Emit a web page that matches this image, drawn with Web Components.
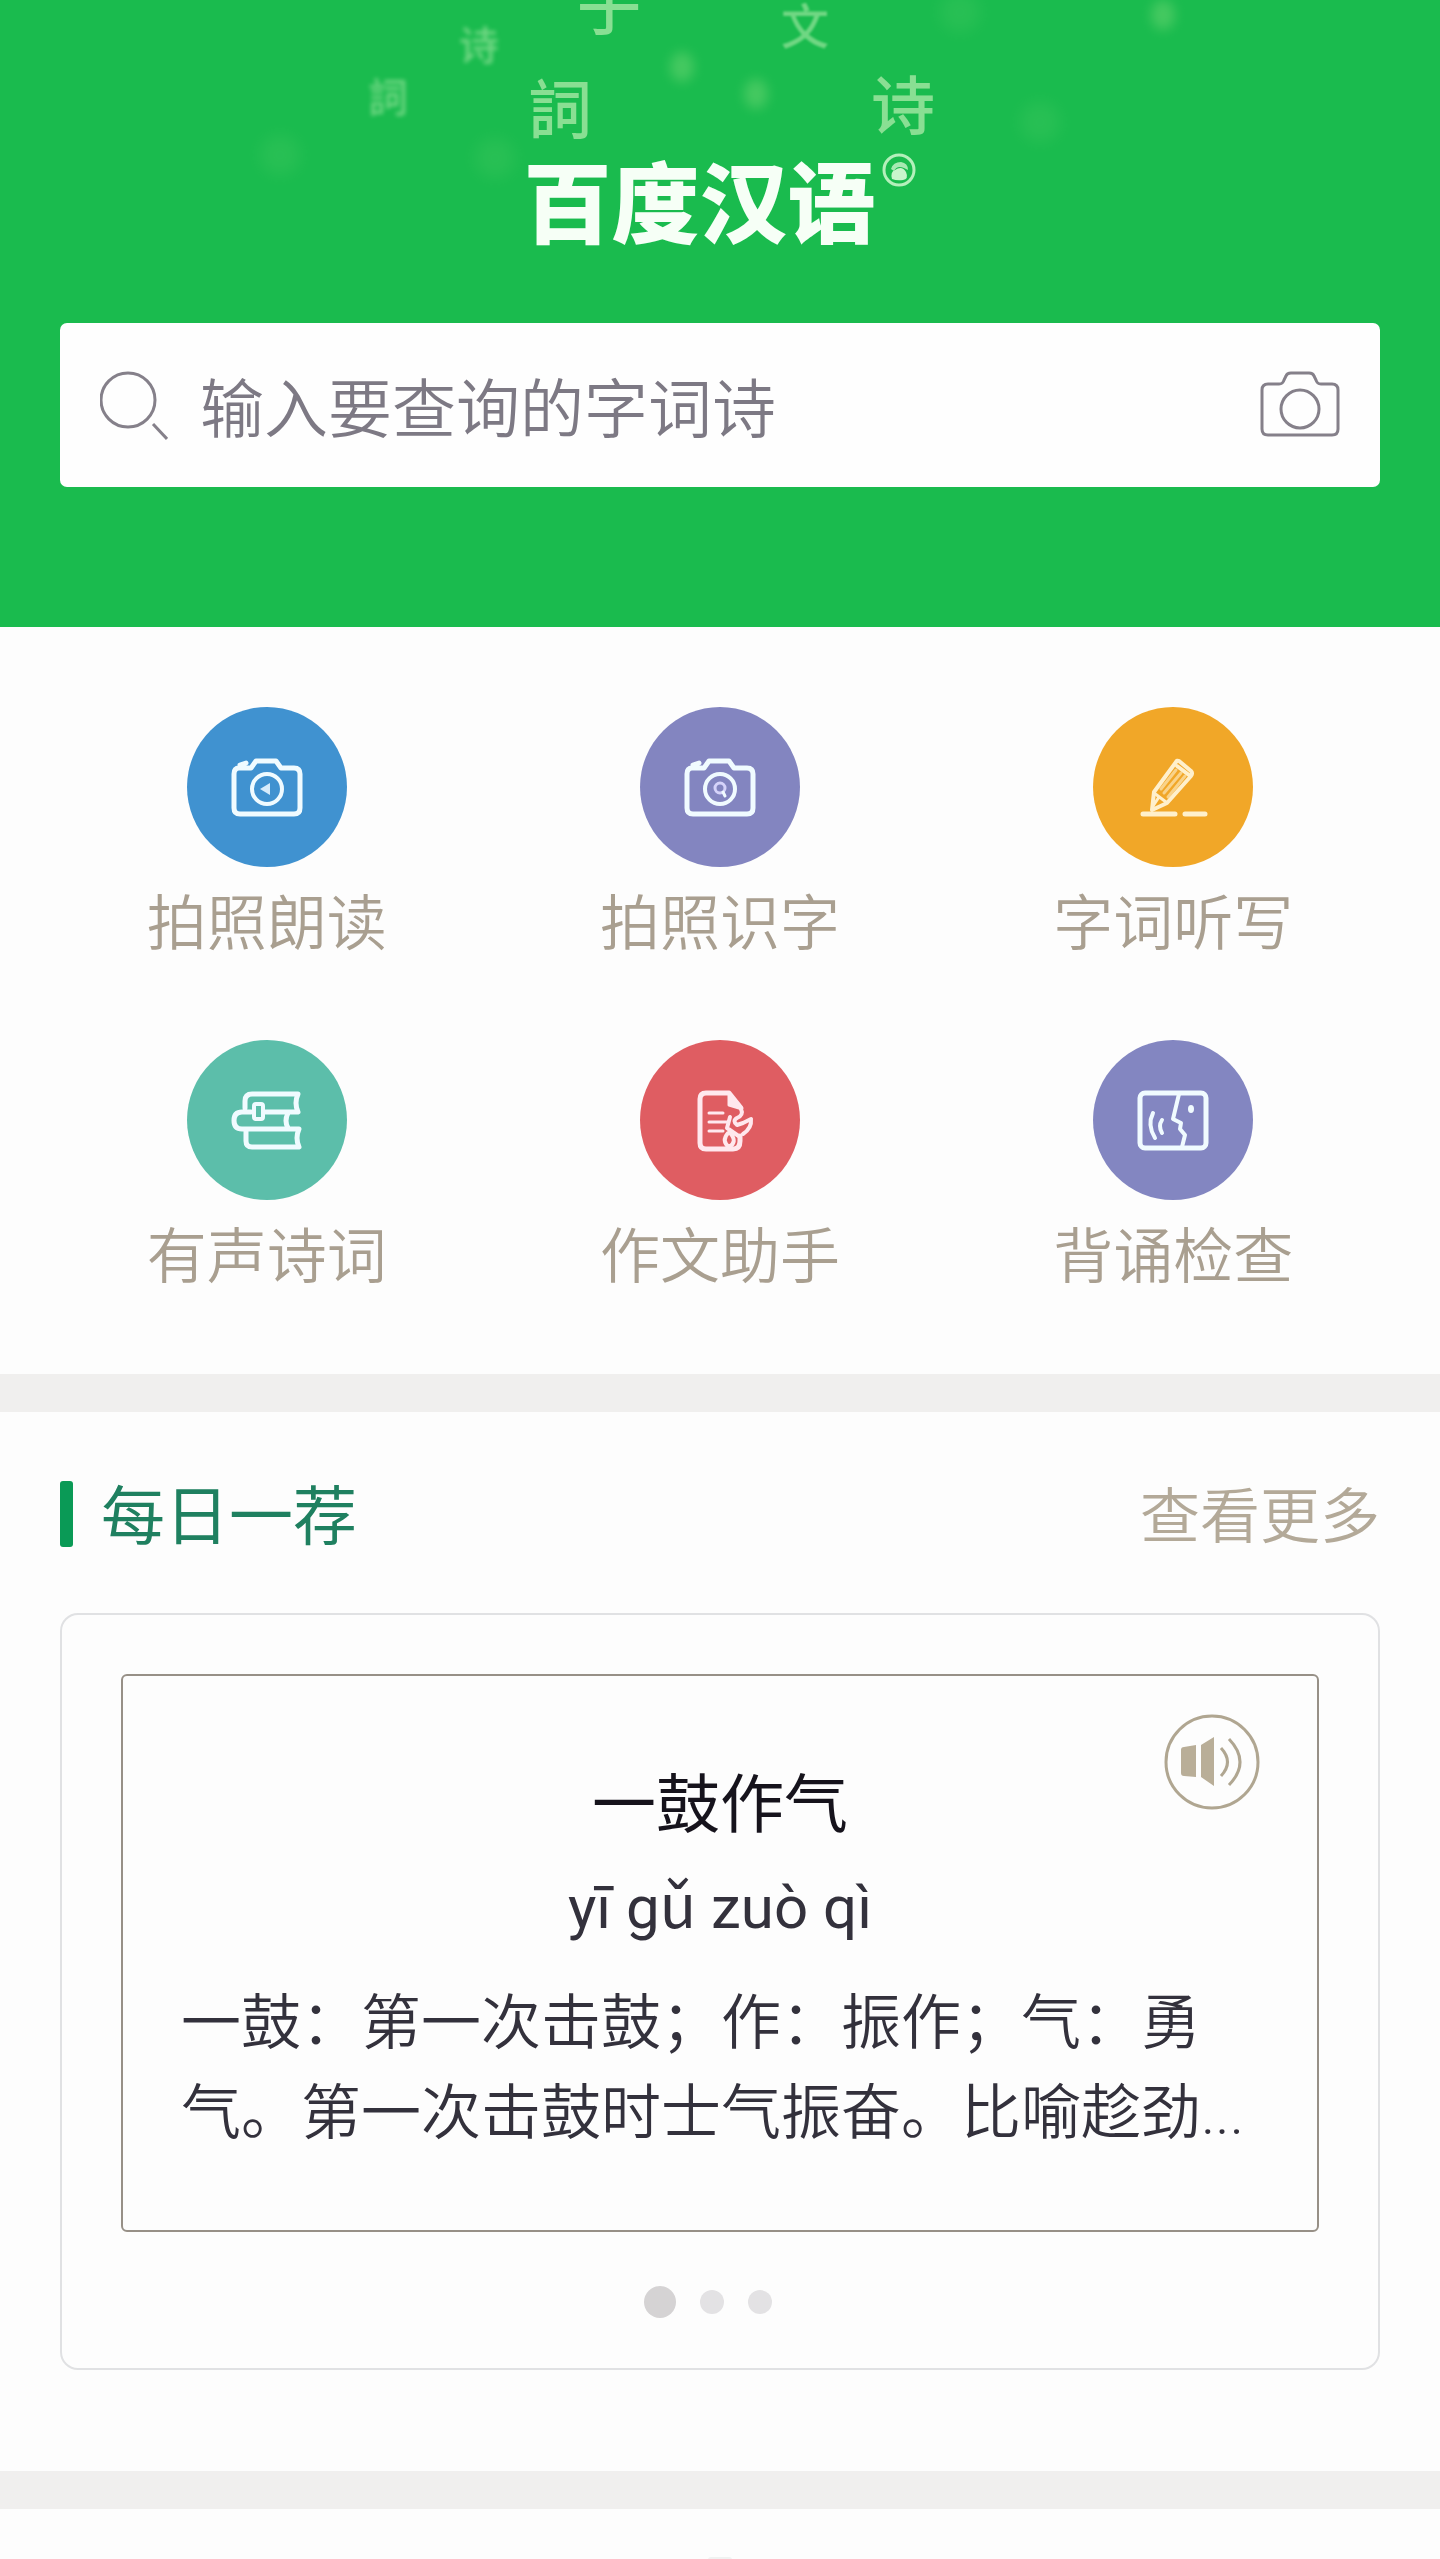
<!DOCTYPE html>
<html lang="zh-CN">
<head>
<meta charset="utf-8">
<meta name="viewport" content="width=device-width, initial-scale=1">
<title>百度汉语</title>
<style>
  body { margin: 0; background: #fdfdfd; color: #33313c; font-family: Roboto, "Noto Sans CJK SC", sans-serif; font-weight: 350; }
</style>
</head>
<body>
<hanyu-app></hanyu-app>
<script>
const define = (name, html) => customElements.define(name, class extends HTMLElement {
  constructor() {
    super();
    const t = document.createElement('template');
    t.innerHTML = html;
    this.attachShadow({ mode: 'open' }).append(t.content.cloneNode(true));
  }
});

/* Drifting characters behind the logo */
define('drifting-chars', `
<style>
  :host { display: block; position: absolute; inset: 0; overflow: hidden; pointer-events: none; color: #c5f3b8; font-weight: 500; }
  span { position: absolute; left: calc(50% + var(--x)); top: var(--y); transform: translate(-50%, -50%); line-height: 1; white-space: nowrap; }
  .l { font-size: 64px; opacity: .65; }
  .m { font-size: 48px; opacity: .5; filter: blur(1px); }
  .s { font-size: 40px; opacity: .5; filter: blur(2px); }
  i { position: absolute; left: calc(50% + var(--x)); top: var(--y); width: 40px; height: 40px; transform: translate(-50%, -50%); border-radius: 50%; background: #8be07f; opacity: .12; filter: blur(8px); }
  .b { opacity: .38; width: 24px; height: 30px; filter: blur(6px); }
</style>
<span class="l" style="--x:-111px;--y:8px">子</span>
<span class="m" style="--x:85px;--y:28px">文</span>
<span class="s" style="--x:-241px;--y:47px">诗</span>
<span class="s" style="--x:-332px;--y:99px">詞</span>
<span class="l" style="--x:-160px;--y:112px">詞</span>
<span class="l" style="--x:183px;--y:108px">诗</span>
<i class="b" style="--x:-38px;--y:67px"></i>
<i class="b" style="--x:36px;--y:94px"></i>
<i class="b" style="--x:443px;--y:15px"></i>
<i style="--x:-440px;--y:155px"></i>
<i style="--x:-225px;--y:158px"></i>
<i style="--x:320px;--y:122px"></i>
<i style="--x:240px;--y:12px"></i>
`);

define('brand-logo', `
<style>
  :host { display: flex; justify-content: center; align-items: flex-start; gap: 5px; position: relative; }
  h1 { margin: 6px 0 0; font-size: 88px; line-height: 96px; font-weight: 900; color: #f6fff6; }
  svg { display: block; width: 36px; height: 36px; }
</style>
<h1><slot></slot></h1><svg viewBox="0 0 36 36" fill="#c9f5cc"><circle cx="18" cy="18" r="15" fill="none" stroke="#b4f0bb" stroke-width="3"/><path d="M11 27q-2-7 3-9 7-5 11 2 3 7-3 8-6 1-11-1z"/><path d="M10 17q2-7 10-7 7 1 7 8l-4-2q-7-3-10 3z" opacity=".8"/></svg>
`);

define('search-box', `
<style>
  :host { display: block; position: relative; }
  form { display: flex; align-items: center; height: 164px; padding: 0 40px; gap: 32px; background: #fefefe; border-radius: 7px; }
  label, button { display: block; flex: none; height: 72px; }
  button { padding: 0; border: 0; background: none; }
  svg { display: block; height: 72px; fill: none; stroke: #85808a; stroke-width: 3; }
  input { flex: 1; min-width: 0; border: 0; outline: 0; padding: 10px 0 0; background: none; font: inherit; font-size: 64px; line-height: 96px; height: 106px; box-sizing: border-box; color: #55525c; }
  input::placeholder { color: #7d7984; opacity: 1; }
</style>
<form onsubmit="return false">
  <label for="q" aria-label="搜索"><svg width="68" viewBox="0 0 68 72"><circle cx="28" cy="31" r="27"/><path d="M53 55l14 15"/></svg></label>
  <input id="q" type="search" placeholder="输入要查询的字词诗">
  <button type="button" aria-label="拍照"><svg width="80" viewBox="0 0 80 72"><path d="M8 15h11q4 0 5-4l2-4q1-3 5-3h18q4 0 5 3l2 4q1 4 5 4h11q6 0 6 6v39q0 6-6 6H8q-6 0-6-6V21q0-6 6-6z"/><circle cx="40" cy="40" r="19"/></svg></button>
</form>
`);

define('tool-link', `
<style>
  :host { display: flex; justify-content: center; }
  a { display: flex; flex-direction: column; align-items: center; gap: 13px; color: #a99f90; text-decoration: none; font-size: 60px; line-height: 90px; }
  span { display: grid; place-items: center; width: 160px; height: 160px; border-radius: 50%; background: var(--tint); }
  ::slotted(svg) { display: block; width: 80px; height: 80px; }
</style>
<a href="#"><span><slot name="icon"></slot></span><slot></slot></a>
`);

define('tool-grid', `
<style>
  :host { display: grid; grid-template-columns: repeat(3, 1fr); row-gap: 70px; padding: 80px 40px 71px; }
</style>
<slot></slot>
`);

define('section-gap', `<style>:host { display: block; height: 38px; background: #f0efee; }</style>`);

define('section-head', `
<style>
  :host { display: flex; align-items: center; justify-content: space-between; height: 96px; }
  h2 { display: flex; align-items: center; gap: 28px; margin: 0; font-size: 64px; line-height: 96px; font-weight: 400; color: #1f8060; }
  h2::before { content: ""; width: 13px; height: 66px; border-radius: 3px; background: #0a9a56; }
  span, a { padding-top: 8px; }
  a { font-size: 60px; line-height: 96px; color: #b3a998; text-decoration: none; }
</style>
<h2><span><slot></slot></span></h2><a href="#"><slot name="more"></slot></a>
`);

define('page-dots', `
<style>
  :host { display: flex; justify-content: center; align-items: center; height: 32px; }
  button { width: 24px; height: 24px; padding: 0; margin: 0 24px 0 0; border: 0; border-radius: 50%; background: #e3e2e4; }
  button[aria-current] { width: 32px; height: 32px; background: #d5d3d4; }
</style>
<button aria-label="1" aria-current="true"></button><button aria-label="2"></button><button aria-label="3"></button>
`);

define('idiom-card', `
<style>
  :host { display: block; padding: 59px 59px 50px; border: 2px solid #e0e1e3; border-radius: 18px; }
  article { position: relative; border: 2px solid #979087; border-radius: 6px; padding: 82px 58px 71px; text-align: center; }
  h3 { margin: 0; font-size: 64px; line-height: 96px; font-weight: 400; color: #16131c; }
  .py { margin: 0; font-size: 60px; line-height: 108px; font-weight: 400; color: #33313c; }
  .ex { margin: 17px 0 0; font-size: 60px; line-height: 90px; color: #33313c; text-align: left; }
  button { position: absolute; right: 57px; top: 38px; padding: 0; border: 0; background: none; }
  svg { display: block; width: 96px; height: 96px; }
  page-dots { margin-top: 54px; }
</style>
<article>
  <button type="button" aria-label="播放读音"><svg viewBox="0 0 96 96" fill="none" stroke="#b0a691" stroke-width="3"><circle cx="48" cy="48" r="46"/><path d="M17 36q0-3 3-3l12-2v32l-12-1q-3 0-3-3zM37 31l13-8v49l-13-9z" fill="#b9ae98" stroke="none"/><path d="M57 34q13 14 0 28M65 25q22 23 0 46"/></svg></button>
  <h3><slot name="word"></slot></h3>
  <p class="py"><slot name="pinyin"></slot></p>
  <p class="ex"><slot></slot></p>
</article>
<page-dots></page-dots>
`);

/* Top edge of the following section, with the tip of its handle */
define('next-peek', `
<style>
  :host { display: flex; justify-content: center; align-items: flex-end; height: 51px; overflow: hidden; }
  i { width: 24px; height: 3px; border-radius: 12px 12px 0 0; background: #f0f2f1; }
</style><i></i>
`);

define('hanyu-app', `
<style>
  :host { display: block; }
  header { position: relative; background: #1abb4e; padding: 152px 60px 140px; }
  search-box { margin-top: 69px; }
  .daily { padding: 54px 60px 101px; }
  idiom-card { margin-top: 51px; }
  svg { fill: none; stroke: #f0fbff; stroke-width: 5; stroke-linejoin: round; stroke-linecap: round; }
</style>
<header>
  <drifting-chars></drifting-chars>
  <brand-logo>百度汉语</brand-logo>
  <search-box></search-box>
</header>
<main>
  <tool-grid>
    <tool-link style="--tint:#4092d0">
      <svg slot="icon" viewBox="0 0 80 80"><path d="M12 21h12l5-7h20l5 7h13q6 0 6 6v34q0 6-6 6H13q-6 0-6-6V27q0-6 5-6zM13 18l6-2"/><circle cx="40" cy="42" r="15" stroke-width="4"/><path d="M33 42l10-6v12z" fill="#d7ecfb" stroke="none"/></svg>拍照朗读</tool-link>
    <tool-link style="--tint:#8385c0">
      <svg slot="icon" viewBox="0 0 80 80"><path d="M12 21h12l5-7h20l5 7h13q6 0 6 6v34q0 6-6 6H13q-6 0-6-6V27q0-6 5-6zM13 18l6-2"/><circle cx="40" cy="42" r="15" stroke-width="4"/><circle cx="40" cy="41" r="5" stroke-width="3" stroke="#d5d3fa"/><path d="M43 45l2 4" stroke-width="3"/></svg>拍照识字</tool-link>
    <tool-link style="--tint:#f1a728">
      <svg slot="icon" viewBox="0 0 80 80"><g style="stroke:#fff0cc"><path d="M46 14l12 10q2 2 0 5L34 56l-15 7 2-18L43 15q1-2 3-1z" stroke-width="4"/><path d="M44 19l12 9" stroke-width="4"/><path d="M21 46l12 9M26 50l-6 9" stroke-width="3"/><path d="M28 42l15-19M31 46l17-20M35 50l17-21" stroke-width="3" opacity=".6"/><path d="M10 67h32M52 67h20" stroke-width="5"/></g></svg>字词听写</tool-link>
    <tool-link style="--tint:#5cbeaa">
      <svg slot="icon" viewBox="0 0 80 80"><path d="M18 28v-7q0-7 7-7h46q-4 9 0 18H38M24 32H15q-8 0-8 8.500t8 8.500h57q-4 9 0 18H25q-6 0-6-6V51M61 33q-4 8 0 15"/><rect x="27" y="24" width="9" height="15" rx="2" stroke-width="4"/></svg>有声诗词</tool-link>
    <tool-link style="--tint:#df5d62">
      <svg slot="icon" viewBox="0 0 80 80"><g style="stroke:#ffe8ee"><path d="M60 56v5q0 8-7 8H26q-6 0-6-6V19q0-6 6-6h23l12 15"/><path d="M49 14v11l10 3z" fill="#ffe8ee" stroke-width="3"/><path d="M29 33h14M29 42h19M29 51h14" stroke-width="3"/><path d="M61 29q3 6-4 9-5 3 0 7l6-2 8-4q1 9-8 15M50 37l-3 11 13 9M48 53q-7 8 1 14 9-5 1-14" stroke-width="4"/></g></svg>作文助手</tool-link>
    <tool-link style="--tint:#8386c1">
      <svg slot="icon" viewBox="0 0 80 80"><rect x="7" y="13" width="66" height="55" rx="5"/><path d="M46 14l-6 25 8 4-1 6 5 6-3 12" stroke-width="4"/><path d="M20 33q-6 12 2 25M29 40q-4 6 0 13" stroke-width="4"/><ellipse cx="58" cy="29" rx="2" ry="3" fill="#f0fbff" stroke-width="2"/></svg>背诵检查</tool-link>
  </tool-grid>
  <section-gap></section-gap>
  <section class="daily">
    <section-head>每日一荐<span slot="more">查看更多</span></section-head>
    <idiom-card>
      <span slot="word">一鼓作气</span><span slot="pinyin">yī gǔ zuò qì</span>一鼓：第一次击鼓；作：振作；气：勇气。第一次击鼓时士气振奋。比喻趁劲...</idiom-card>
  </section>
  <section-gap></section-gap>
  <next-peek></next-peek>
</main>
`);
</script>
</body>
</html>
